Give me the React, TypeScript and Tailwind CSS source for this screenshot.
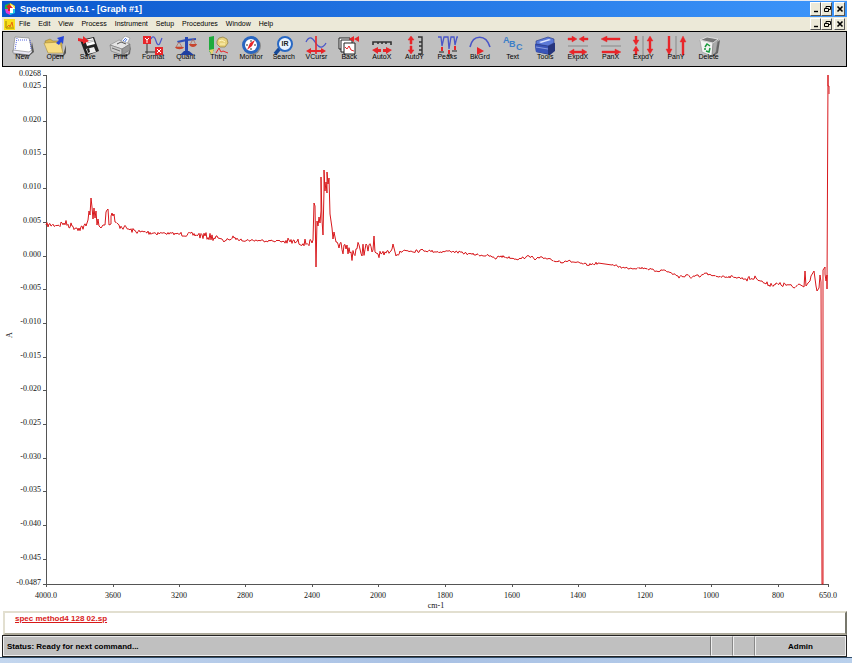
import type { ReactNode } from "react";

const MENUS = [
  "File",
  "Edit",
  "View",
  "Process",
  "Instrument",
  "Setup",
  "Procedures",
  "Window",
  "Help",
];

const RED = "#e8262a";
const BLUE = "#4a56c8";

// Toolbar drawings, all on a 24 x 22 grid
const TOOLS: { label: string; icon: ReactNode }[] = [
  {
    label: "New",
    icon: (
      <>
        <path d="M3 18l16 2 5-4-2-10-2 11z" fill="#555" />
        <path d="M5 1l14 1 3 13-3 3-16-2z" fill="#fff" stroke="#777" strokeWidth="0.6" />
        <path d="M3 14l16 2 3-2v2l-3 3-16-2z" fill="#e8e8f4" stroke="#666" strokeWidth="0.5" />
        <path d="M7 2L5 14M8 4h10M20 4l1 9" stroke="#4455dd" strokeWidth="0.9" strokeDasharray="1 1" fill="none" />
      </>
    ),
  },
  {
    label: "Open",
    icon: (
      <>
        <path d="M6 18l14 1 3-10v8l-3 4z" fill="#555" />
        <path d="M2 5l5-2 3 2h9v11H5z" fill="#d9b64c" stroke="#8a7434" strokeWidth="0.5" />
        <path d="M1 7l16-1 3 11H5z" fill="#f7dd84" stroke="#9a8034" strokeWidth="0.5" />
        <path d="M14 2l7-2-1 8-2-2-2 3-3-2 3-3z" fill="#2846d8" />
      </>
    ),
  },
  {
    label: "Save",
    icon: (
      <>
        <path d="M4 4l14-3 5 14-13 5z" fill="#222" />
        <path d="M9 4l8-2 2 6-8 2z" fill="#fff" />
        <path d="M10 13l8-2 2 5-8 2z" fill="#eee" />
        <path d="M11 13l2-1 1 4-2 1z" fill="#222" />
        <path d="M11 5l6-1M11 7l7-2" stroke="#888" strokeWidth="0.6" />
        <path d="M2 2l5 1V0l6 5-6 3V6L2 5z" fill={RED} />
      </>
    ),
  },
  {
    label: "Print",
    icon: (
      <>
        <path d="M5 19l15-1 3-8-1 8-5 3z" fill="#666" />
        <path d="M12 6l5-6 5 2-4 8z" fill="#fff" stroke="#777" strokeWidth="0.5" />
        <path d="M15 5l3-3M16 7l3-4" stroke="#4a76e0" strokeWidth="1" />
        <path d="M2 9l9-5 11 4-8 5z" fill="#e4e4e4" stroke="#777" strokeWidth="0.5" />
        <path d="M2 9l12 4v6L3 15z" fill="#cacaca" stroke="#666" strokeWidth="0.5" />
        <path d="M14 13l8-5v6l-8 5z" fill="#989898" stroke="#666" strokeWidth="0.5" />
        <path d="M4 12l8 3" stroke="#444" strokeWidth="0.7" />
        <path d="M9 8l4-2 5 2" stroke="#555" fill="none" />
      </>
    ),
  },
  {
    label: "Format",
    icon: (
      <>
        <rect x="2" y="0" width="8" height="8" fill={RED} />
        <path d="M4 2l2 2 2-2M6 4v3" stroke="#fff" fill="none" />
        <path d="M6 8v10M4 16h10" stroke="#333" fill="none" />
        <rect x="14" y="11" width="8" height="8" fill={RED} />
        <path d="M16 13l4 4M20 13l-4 4" stroke="#fff" />
        <path d="M10 3c2-4 4-2 5 2s3 5 4 2l2-5" stroke={BLUE} strokeWidth="1.2" fill="none" />
      </>
    ),
  },
  {
    label: "Quant",
    icon: (
      <>
        <path d="M3 5l9-2 10-1v2l-9 1-9 2z" fill="#3050b8" />
        <path d="M11 1h3v15h-3z" fill="#2748b4" />
        <path d="M6 19l4-4h5l5 4z" fill="#2040a0" />
        <path d="M5 6l-3 5h6zM19 3l-3 6h6z" fill="none" stroke="#b06050" strokeWidth="0.7" />
        <path d="M1 11h9c-1 3-8 3-9 0zM15 8h8c-1 4-7 4-8 0z" fill="#c8452e" />
      </>
    ),
  },
  {
    label: "Thtrp",
    icon: (
      <>
        <path d="M3 1l5-1v14l-3 4-2-3z" fill="#1faa3c" />
        <path d="M3 14l3 5 2-6" fill="#e8d070" />
        <path d="M11 5l2-3 4-1 4 2 1 4-3 4h-5l-3-3z" fill="#e8d27c" stroke="#8d7a39" strokeWidth="0.7" />
        <path d="M13 5l3-1 3 2M14 8h5" stroke="#fff5bd" fill="none" />
        <path d="M10 17l3-5 2 4 2-1 5 2" stroke={RED} fill="none" />
      </>
    ),
  },
  {
    label: "Monitor",
    icon: (
      <>
        <circle cx="13" cy="10" r="9" fill="#555" opacity="0.5" />
        <circle cx="12" cy="9" r="9" fill="#2a66c0" />
        <circle cx="12" cy="9" r="6" fill="#fff" />
        <path d="M12 4v2M12 12v2M7 9h2M15 9h2" stroke="#333" />
        <path d="M16 4l-3 6-5 4 3-7z" fill={RED} />
      </>
    ),
  },
  {
    label: "Search",
    icon: (
      <>
        <path d="M9 11l-6 7" stroke="#184a98" strokeWidth="3.5" />
        <circle cx="13" cy="8" r="7" fill="#e9f3ff" stroke="#2868c4" strokeWidth="2" />
        <text x="13" y="10" fontSize="7" fontWeight="700" textAnchor="middle" fill="#222">
          IR
        </text>
      </>
    ),
  },
  {
    label: "VCursr",
    icon: (
      <>
        <path d="M2 6c3-6 6-5 9 0s7 8 11 1" stroke={BLUE} strokeWidth="1.3" fill="none" />
        <path d="M12 0v18" stroke={RED} strokeWidth="1.6" />
        <path d="M2 15l5-3v2h10v-2l5 3-5 3v-2H7v2z" fill={RED} />
      </>
    ),
  },
  {
    label: "Back",
    icon: (
      <>
        <path d="M2 2h11v11H2z" fill="#fff" stroke="#222" />
        <path d="M4 4h11v12H4z" fill="#fff" stroke="#222" />
        <path d="M7 7h11v11H7z" fill="#fff" stroke="#222" />
        <path d="M8 11l2 2 2-3 2 4 3 1" stroke={RED} fill="none" />
        <path d="M12 3l5-3v6zM17 3l5-3v6z" fill={RED} />
      </>
    ),
  },
  {
    label: "AutoX",
    icon: (
      <>
        <path d="M3 9V6h18v3M8 6v2M12 6v2M16 6v2" stroke="#333" strokeWidth="1.6" fill="none" />
        <path d="M2 14l6-3v2h3v3H8v2zM22 14l-6-3v2h-3v3h3v2z" fill={RED} />
      </>
    ),
  },
  {
    label: "AutoY",
    icon: (
      <>
        <path d="M15 1h4v17h-4M19 6h-3M19 10h-3M19 14h-3" stroke="#333" strokeWidth="1.4" fill="none" />
        <path d="M8 0l3 4H9v4H7V4H5zM8 18l3-4H9v-4H7v4H5z" fill={RED} stroke={RED} strokeWidth="0.5" />
      </>
    ),
  },
  {
    label: "Peaks",
    icon: (
      <>
        <path d="M3 1h3l1 9 2-9h4l1 12 2-12h3l1 8 2-8h1" stroke={BLUE} strokeWidth="1.3" fill="none" />
        <path d="M6 11h2v4H6zM13 14h2v4h-2zM19 10h2v4h-2z" fill={RED} />
        <path d="M4 16h5M12 19h5M17 15h5" stroke="#222" />
      </>
    ),
  },
  {
    label: "BkGrd",
    icon: (
      <>
        <path d="M2 11C5-2 18-2 22 11" stroke={BLUE} strokeWidth="1.6" fill="none" />
        <path d="M9 11l7 4-7 4z" fill={RED} />
      </>
    ),
  },
  {
    label: "Text",
    icon: (
      <g fill="#3d7fc8" fontWeight="700" fontSize="9">
        <text x="2" y="7">A</text>
        <text x="8" y="11">B</text>
        <text x="15" y="14">C</text>
      </g>
    ),
  },
  {
    label: "Tools",
    icon: (
      <>
        <path d="M2 8l12-3 8 2v8l-5 4-14-3z" fill="#26357c" />
        <path d="M2 8l13 2v8L3 16z" fill="#3a55b8" />
        <path d="M3 5l12-4 6 2v4l-6 3-12-2z" fill="#5c7ad8" stroke="#26357c" strokeWidth="0.6" />
        <path d="M6 6l10-3 2 1-10 3z" fill="#dfe7ff" />
        <path d="M3 11l12 2" stroke="#aebcf4" strokeWidth="0.7" />
      </>
    ),
  },
  {
    label: "ExpdX",
    icon: (
      <g stroke={RED} strokeWidth="0.4">
        <path d="M2 2h4V0l5 3-5 3V4H2zM22 2h-4V0l-5 3 5 3V4h4z" fill={RED} />
        <path d="M2 10h20" stroke="#888" strokeWidth="1" />
        <path d="M3 16l5-3v2h8v-2l5 3-5 3v-2H8v2z" fill={RED} />
      </g>
    ),
  },
  {
    label: "PanX",
    icon: (
      <g stroke={RED} strokeWidth="0.4">
        <path d="M2 3l6-3v2h13v2H8v2z" fill={RED} />
        <path d="M2 10h20" stroke="#888" strokeWidth="1" />
        <path d="M22 16l-6-3v2H3v2h13v2z" fill={RED} />
      </g>
    ),
  },
  {
    label: "ExpdY",
    icon: (
      <g stroke={RED} strokeWidth="0.4">
        <path d="M4 0h2v4h2l-3 5-3-5h2zM4 19h2v-4h2l-3-5-3 5h2z" fill={RED} />
        <path d="M12 0v19" stroke="#888" strokeWidth="1" />
        <path d="M19 0l3 5h-2v8h2l-3 5-3-5h2V5h-2z" fill={RED} />
      </g>
    ),
  },
  {
    label: "PanY",
    icon: (
      <g stroke={RED} strokeWidth="0.4">
        <path d="M4 0h2v13h2l-3 6-3-6h2z" fill={RED} />
        <path d="M12 0v19" stroke="#888" strokeWidth="1" />
        <path d="M18 19h2V6h2l-3-6-3 6h2z" fill={RED} />
      </g>
    ),
  },
  {
    label: "Delete",
    icon: (
      <>
        <path d="M18 8l5-4-2 13-6 4z" fill="#666" />
        <path d="M3 4l13 3-1 13L5 16z" fill="#f2f2f2" stroke="#888" strokeWidth="0.5" />
        <path d="M16 7l5-4-2 13-4 4z" fill="#aaa" stroke="#777" strokeWidth="0.5" />
        <path d="M3 4l7-3 11 2-5 4z" fill="#777" stroke="#eee" strokeWidth="0.8" />
        <path d="M8 11l2-3 3 2M13 12l-1 4-3-1M8 14v-2" stroke="#199a3c" strokeWidth="1.5" fill="none" />
      </>
    ),
  },
];

const Y_TICKS = [
  "0.025", "0.020", "0.015", "0.010", "0.005", "0.000", "-0.005", "-0.010",
  "-0.015", "-0.020", "-0.025", "-0.030", "-0.035", "-0.040", "-0.045",
];

const X_TICKS: [string, number][] = [
  ["4000.0", 46], ["3600", 113], ["3200", 179], ["2800", 245], ["2400", 312],
  ["2000", 378], ["1800", 445], ["1600", 512], ["1400", 578], ["1200", 645],
  ["1000", 711], ["800", 778], ["650.0", 828],
];

// x, y, noise amplitude on the way to the point (0 = straight line)
const TRACE: [number, number, number][] = [
  [46, 225, 0], [58, 225, 2], [64, 223, 3], [72, 226, 3], [79, 228, 3], [86, 226, 3],
  [88, 220, 0], [89, 211, 0], [90, 215, 0], [91, 198, 0], [92, 207, 0], [93, 219, 0],
  [94, 208, 0], [95, 218, 0], [96, 211, 0], [97, 225, 0], [98, 219, 0], [99, 226, 0],
  [101, 228, 0], [103, 225, 0], [105, 225, 0], [106, 212, 0], [107, 210, 0], [108, 209, 0],
  [109, 225, 0], [111, 224, 0], [111, 216, 0], [112, 213, 0], [113, 216, 0], [114, 214, 0],
  [115, 222, 0], [119, 225, 1], [124, 227, 3], [130, 230, 2], [140, 232, 2], [160, 233, 2],
  [180, 234, 1], [198, 235, 2], [218, 238, 3], [222, 239, 0], [224, 242, 0], [228, 239, 1],
  [234, 238, 2], [240, 240, 1], [280, 241, 1], [296, 242, 3], [312, 243, 3], [313, 240, 0],
  [314, 203, 0], [315, 206, 0], [316, 267, 0], [317, 221, 0], [318, 226, 0], [319, 217, 0],
  [320, 223, 0], [321, 211, 0], [321, 177, 0], [322, 220, 0], [323, 235, 0], [324, 190, 0],
  [324, 170, 0], [325, 191, 0], [326, 182, 0], [327, 193, 0], [327, 172, 0], [328, 184, 0],
  [329, 178, 0], [330, 214, 0], [332, 228, 0], [333, 239, 0], [334, 232, 0], [336, 242, 0],
  [339, 248, 2], [346, 249, 5], [350, 253, 7], [360, 249, 7], [373, 250, 6], [374, 236, 0],
  [375, 252, 0], [378, 254, 3], [384, 255, 3], [392, 249, 2], [393, 244, 0], [396, 256, 0],
  [400, 251, 2], [420, 250, 2], [440, 252, 1], [450, 251, 1], [470, 254, 1], [490, 256, 1],
  [496, 259, 1], [498, 256, 0], [519, 259, 1], [526, 257, 1], [532, 256, 1], [535, 260, 0],
  [538, 257, 0], [555, 261, 1], [565, 261, 2], [568, 261, 1], [588, 265, 1], [598, 263, 1],
  [612, 265, 0], [625, 268, 1], [645, 268, 1], [656, 271, 1], [664, 270, 1], [678, 276, 1],
  [700, 277, 2], [705, 273, 1], [712, 276, 1], [735, 277, 1], [746, 279, 1], [756, 278, 2],
  [766, 284, 1], [788, 285, 2], [794, 288, 2], [799, 284, 1], [804, 287, 0], [805, 271, 0],
  [806, 286, 0], [808, 283, 0], [810, 281, 0], [811, 276, 0], [814, 271, 0], [816, 286, 0],
  [817, 291, 0], [819, 288, 0], [820, 275, 0], [821, 282, 0], [822, 584, 0], [823, 584, 0],
  [823, 270, 0], [825, 267, 0], [825, 274, 0], [826, 281, 0], [827, 275, 0], [827, 289, 0],
  [828, 75, 0], [828, 86, 0], [829, 86, 0], [829, 94, 0],
];

function buildTrace() {
  let seed = 7;
  const random = () => {
    seed = (seed * 16807) % 2147483647;
    return seed / 2147483647 - 0.5;
  };
  let [px, py] = TRACE[0];
  let d = `M${px} ${py}`;
  for (const [x, y, noise] of TRACE.slice(1)) {
    if (noise > 0) {
      for (let nx = px + 1; nx < x; nx++) {
        const base = py + ((y - py) * (nx - px)) / (x - px);
        d += `L${nx} ${(base + random() * noise * 2.4).toFixed(1)}`;
      }
    }
    d += `L${x} ${y}`;
    px = x;
    py = y;
  }
  return d;
}

function Spectrum() {
  return (
    <svg
      viewBox="0 67 852 544"
      className="block w-full font-['Liberation_Serif',serif] text-[8px]"
      role="img"
      aria-label="Absorbance spectrum"
    >
      <g stroke="#555" shapeRendering="crispEdges">
        <path d="M46 75V584H828" fill="none" />
        <path d="M43 75h3M43 584h3" />
        {Y_TICKS.map((label, i) => (
          <path key={label} d={`M43 ${Math.round(87 + i * 33.7)}h3`} />
        ))}
        {X_TICKS.map(([label, x]) => (
          <path key={label} d={`M${x} 584v3`} />
        ))}
      </g>
      <g fill="#111" textAnchor="end">
        <text x="41" y="76">0.0268</text>
        {Y_TICKS.map((label, i) => (
          <text key={label} x="41" y={Math.round(88 + i * 33.7)}>
            {label}
          </text>
        ))}
        <text x="41" y="585">-0.0487</text>
      </g>
      <g fill="#111" textAnchor="middle">
        {X_TICKS.map(([label, x]) => (
          <text key={label} x={x} y="598">
            {label}
          </text>
        ))}
        <text x="436" y="608">cm-1</text>
        <text transform="translate(12 335) rotate(-90)">A</text>
      </g>
      <path d={buildTrace()} fill="none" stroke="#d8181c" strokeWidth="1" strokeLinejoin="bevel" />
    </svg>
  );
}

function WindowButtons({ name }: { name: string }) {
  const style =
    "flex h-full w-[11px] items-center justify-center border border-white border-r-[#555] border-b-[#555] bg-[#ece9d8]";
  return (
    <div className="ml-auto flex h-full">
      <button type="button" aria-label={`Minimize ${name}`} className={style}>
        <svg viewBox="0 0 8 8" className="size-2">
          <path d="M2 6.5h4" stroke="#000" strokeWidth="1.4" />
        </svg>
      </button>
      <button type="button" aria-label={`Restore ${name}`} className={style}>
        <svg viewBox="0 0 8 8" className="size-2" fill="none" stroke="#000">
          <path d="M3 3V1.5h4.5v3H6M1.5 3.5h4v3h-4z" />
        </svg>
      </button>
      <button type="button" aria-label={`Close ${name}`} className={`${style} ml-0.5`}>
        <svg viewBox="0 0 8 8" className="size-2">
          <path d="M1.5 1.5l5 5M6.5 1.5l-5 5" stroke="#000" strokeWidth="1.6" />
        </svg>
      </button>
    </div>
  );
}

export default function App() {
  return (
    <div className="flex min-h-screen flex-col bg-white font-['Liberation_Sans',sans-serif] text-black">
      <header className="mr-[5px] ml-0.5">
        <div className="flex h-[17px] items-center gap-1 border-t border-[#dfe8f5] bg-linear-to-r from-[#0a56cc] to-[#3d96fb] px-0.5 py-px text-white">
          <svg viewBox="0 0 12 12" className="size-3">
            <path d="M1 2l5-2v6H1z" fill="#18b848" />
            <path d="M6 0l5 3v3H6z" fill="#f4e12c" />
            <path d="M1 6h5v6L2 10z" fill="#e83ad0" />
            <path d="M6 6h5v4l-5 2z" fill="#20c8e8" />
            <path d="M4 5l4-3 3 4H9v4H6V6z" fill="#fff" />
            <path d="M2 4l3-3 4 4H6v3H4V5z" fill="#e02020" />
          </svg>
          <h1 className="text-[9px] leading-3 font-bold">Spectrum v5.0.1 - [Graph #1]</h1>
          <WindowButtons name="application" />
        </div>
        <div className="flex h-3.5 items-center bg-[#ece9d8] px-0.5 py-px">
          <svg viewBox="0 0 11 11" className="mr-1 size-[11px]">
            <path d="M0 0h11v11H0z" fill="#f8e01c" />
            <path d="M2 2v7h8" stroke="#a08800" fill="none" />
            <path d="M3 8l2-2 1 2 2-5 1 5" stroke="#e86a10" fill="none" />
          </svg>
          <nav className="flex gap-2 text-[7px] leading-3">
            {MENUS.map((menu) => (
              <button key={menu} type="button">
                {menu}
              </button>
            ))}
          </nav>
          <WindowButtons name="graph" />
        </div>
        <div
          className="h-9 border border-black bg-[#c0c0c0] pt-1 pl-[3px]"
          role="toolbar"
          aria-label="Tools"
        >
          <div className="grid w-[719px] grid-cols-22">
            {TOOLS.map(({ label, icon }) => (
              <button key={label} type="button" className="flex flex-col items-center">
                <svg viewBox="0 0 24 22" className="h-[22px] w-6">
                  {icon}
                </svg>
                <span className="relative -mt-[5px] text-[7px] leading-2">{label}</span>
              </button>
            ))}
          </div>
        </div>
      </header>

      <main className="flex-1">
        <Spectrum />
      </main>

      <footer>
        <div className="mr-[5px] ml-[3px] flex h-6 items-start border-2 border-[#e2dfd0] border-r-[#77776c] border-b-[#aca899] pl-2.5">
          <a href="#spectrum" className="text-[8px] leading-3 font-bold text-[#d81818] underline">
            spec method4 128 02.sp
          </a>
        </div>
        <div className="mr-[5px] ml-0.5 flex h-[22px] border border-[#222] bg-[#c0c0c0] text-[8px] font-bold">
          <p className="flex flex-1 items-center border border-[#eee] border-r-[#777] pt-px pl-[3px]">
            Status: Ready for next command...
          </p>
          <div className="w-[22px] border border-[#eee] border-r-[#888]" />
          <div className="w-[22px] border border-[#eee] border-r-[#888]" />
          <p className="flex w-[91px] items-center justify-center border border-[#eee] pt-px">
            Admin
          </p>
        </div>
        <div className="h-1.5 border-t border-[#33506c] bg-linear-to-r from-[#c3d6ee] via-[#a9c1e4] to-[#b9d0ec]" />
      </footer>
    </div>
  );
}
